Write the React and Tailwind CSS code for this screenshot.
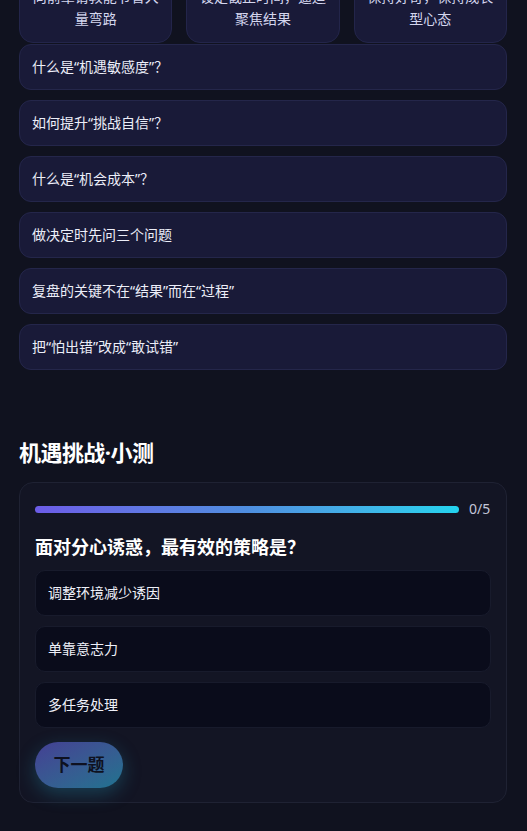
import React from 'react';

const tips = [
  '向前辈请教能节省大量弯路',
  '设定截止时间，逼迫聚焦结果',
  '保持好奇，保持成长型心态',
];

const faqs = [
  '什么是“机遇敏感度”？',
  '如何提升“挑战自信”？',
  '什么是“机会成本”？',
  '做决定时先问三个问题',
  '复盘的关键不在“结果”而在“过程”',
  '把“怕出错”改成“敢试错”',
];

const options = ['调整环境减少诱因', '单靠意志力', '多任务处理'];

export default function App() {
  return (
    <div
      className="min-h-[831px] h-[831px] overflow-hidden bg-[#10121f] text-white"
      style={{ fontFamily: '"Noto Sans", "Noto Sans CJK SC", sans-serif' }}
    >
      <div className="px-[19px] pr-[20px]">
        {/* Tip cards (scrolled partly out of view) */}
        <div className="grid grid-cols-3 gap-[14px] -mt-[27px]">
          {tips.map((t) => (
            <div
              key={t}
              className="rounded-[14px] border border-[#23254a] bg-[#191a38] px-[11px] py-3 text-center text-sm leading-[22px] text-[#d4d6ee]"
            >
              {t}
            </div>
          ))}
        </div>

        {/* FAQ list */}
        <div className="mt-px flex flex-col gap-[10px]">
          {faqs.map((q) => (
            <div
              key={q}
              className="flex h-[46px] items-center rounded-[12px] border border-[#24264a] bg-[#191a38] px-3 text-sm text-[#eceef8]"
            >
              {q}
            </div>
          ))}
        </div>

        {/* Quiz */}
        <h2 className="mt-[67px] text-[22px] font-bold leading-[30px] tracking-tight text-white">
          机遇挑战·小测
        </h2>
        <div className="mt-[15px] rounded-[14px] border border-[#1f2233] bg-[#131524] px-[15px] pt-[16px] pb-[14px]">
          <div className="flex items-center gap-[10px]">
            <div className="h-[7px] flex-1 rounded-full bg-gradient-to-r from-[#6c5ce7] via-[#4f8ee0] to-[#22d3ee]" />
            <span className="w-[22px] text-sm leading-5 text-[#c3c6d8]">0/5</span>
          </div>
          <p className="mt-[15px] text-lg font-bold leading-[26px] text-white">
            面对分心诱惑，最有效的策略是？
          </p>
          <div className="mt-[10px] flex flex-col gap-[10px]">
            {options.map((o) => (
              <div
                key={o}
                className="flex h-[46px] items-center rounded-[10px] border border-[#181b2c] bg-[#0a0c1b] px-3 text-sm text-[#eef0f8]"
              >
                {o}
              </div>
            ))}
          </div>
          <button className="mt-[14px] h-[46px] w-[88px] rounded-full bg-gradient-to-br from-[#433f93] to-[#1d738f] text-[17px] font-bold text-[#0e1120] shadow-[0_6px_18px_rgba(34,140,170,0.35)]">
            下一题
          </button>
        </div>
      </div>
    </div>
  );
}
